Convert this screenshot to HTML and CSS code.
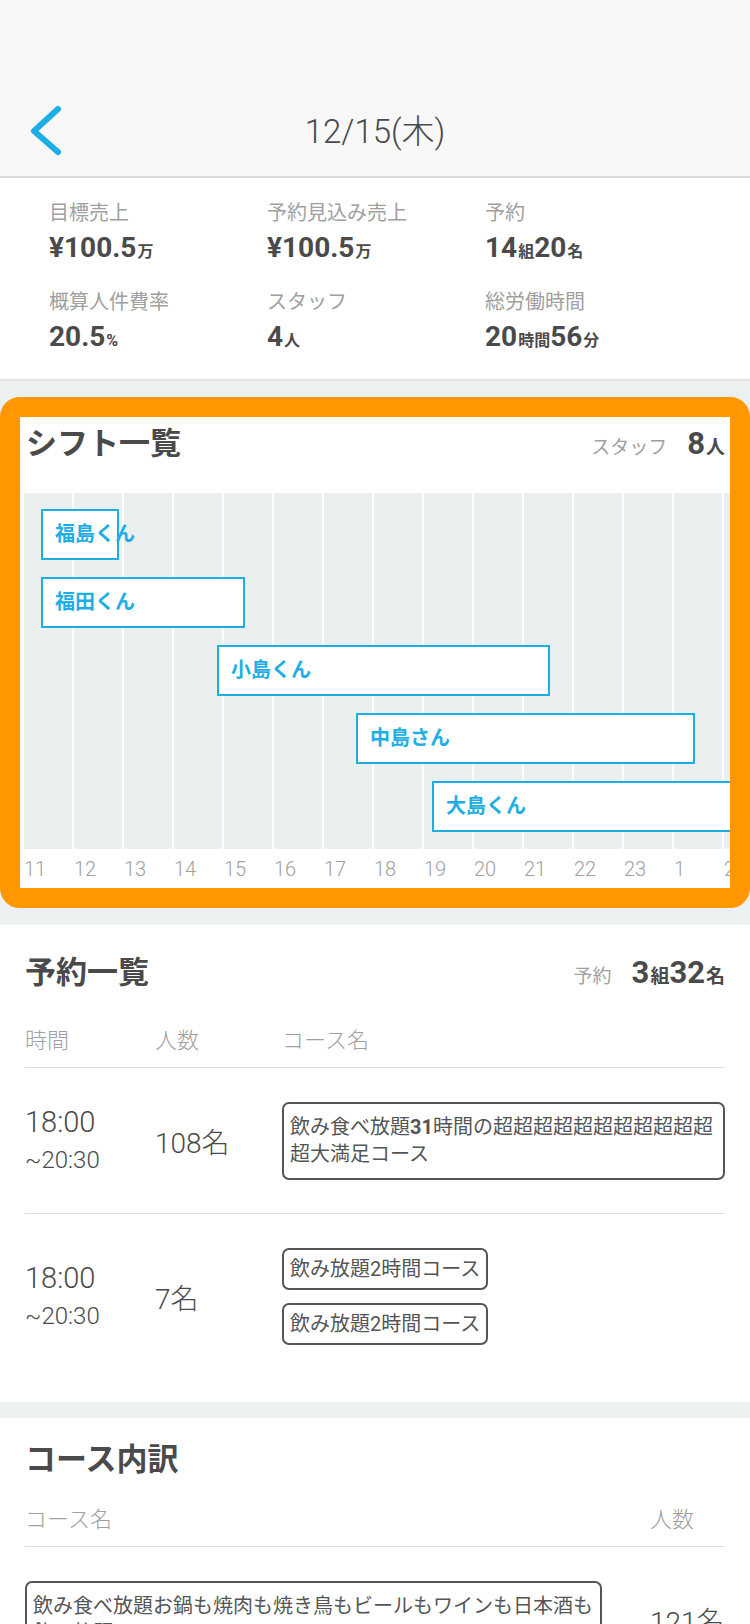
FILE: index.html
```html
<!DOCTYPE html>
<html lang="ja">
<head>
    <meta charset="UTF-8">
    <meta name="viewport" content="width=device-width, initial-scale=1.0">
    <title>12/15(木)</title>
    <link rel="stylesheet" href="styles.css">
</head>
<body>
    <header class="topbar">
        <div class="topbar-row">
            <a class="back" href="#">
                <svg width="36" height="56" viewBox="0 0 36 56">
                    <path d="M30 6 L6 28 L30 49" fill="none" stroke="#1eaee6" stroke-width="6" stroke-linecap="round" stroke-linejoin="round"/>
                </svg>
            </a>
            <h1 class="date">12/15(木)</h1>
            <div></div>
        </div>
    </header>

    <section class="summary">
        <div class="stat">
            <div class="stat-label">目標売上</div>
            <div class="stat-value">¥100.5<small>万</small></div>
        </div>
        <div class="stat">
            <div class="stat-label">予約見込み売上</div>
            <div class="stat-value">¥100.5<small>万</small></div>
        </div>
        <div class="stat">
            <div class="stat-label">予約</div>
            <div class="stat-value">14<small>組</small>20<small>名</small></div>
        </div>
        <div class="stat">
            <div class="stat-label">概算人件費率</div>
            <div class="stat-value">20.5<small>%</small></div>
        </div>
        <div class="stat">
            <div class="stat-label">スタッフ</div>
            <div class="stat-value">4<small>人</small></div>
        </div>
        <div class="stat">
            <div class="stat-label">総労働時間</div>
            <div class="stat-value">20<small>時間</small>56<small>分</small></div>
        </div>
    </section>

    <section class="shift-card">
        <div class="card-head">
            <h2>シフト一覧</h2>
            <div class="count">
                <span class="count-label">スタッフ</span>
                <span class="count-value">8<small>人</small></span>
            </div>
        </div>
        <div class="timeline">
            <div class="lanes">
                <div class="bar" style="margin-left: 17px; width: 78px;">福島くん</div>
                <div class="bar" style="margin-left: 17px; width: 204px;">福田くん</div>
                <div class="bar" style="margin-left: 193px; width: 333px;">小島くん</div>
                <div class="bar" style="margin-left: 332px; width: 339px;">中島さん</div>
                <div class="bar" style="margin-left: 408px; width: 400px;">大島くん</div>
            </div>
            <div class="hours">
                <span>11</span><span>12</span><span>13</span><span>14</span><span>15</span>
                <span>16</span><span>17</span><span>18</span><span>19</span><span>20</span>
                <span>21</span><span>22</span><span>23</span><span>1</span><span>2</span>
            </div>
        </div>
    </section>

    <section class="panel">
        <div class="panel-head">
            <h2>予約一覧</h2>
            <div class="count">
                <span class="count-label">予約</span>
                <span class="count-value">3<small>組</small>32<small>名</small></span>
            </div>
        </div>
        <div class="res-head">
            <span>時間</span>
            <span>人数</span>
            <span>コース名</span>
        </div>
        <div class="res-row">
            <div class="time">
                <div class="time-start">18:00</div>
                <div class="time-end">~20:30</div>
            </div>
            <div class="people">108名</div>
            <div class="tags">
                <div class="tag multi">飲み食べ放題<b>31</b>時間の超超超超超超超超超超超超大満足コース</div>
            </div>
        </div>
        <div class="res-row">
            <div class="time">
                <div class="time-start">18:00</div>
                <div class="time-end">~20:30</div>
            </div>
            <div class="people">7名</div>
            <div class="tags">
                <div class="tag">飲み放題2時間コース</div>
                <div class="tag">飲み放題2時間コース</div>
            </div>
        </div>
    </section>

    <section class="panel panel-courses">
        <div class="panel-head">
            <h2>コース内訳</h2>
        </div>
        <div class="course-head">
            <span>コース名</span>
            <span>人数</span>
        </div>
        <div class="course-row">
            <div class="tags">
                <div class="tag multi">飲み食べ放題お鍋も焼肉も焼き鳥もビールもワインも日本酒も飲み放題コース</div>
            </div>
            <div class="people">121名</div>
        </div>
    </section>
</body>
</html>
```

FILE: styles.css
```css
body {
    margin: 0;
    width: 750px;
    background: #ecf0f1;
    color: #4a4a4a;
    font-family: Roboto, "Noto Sans CJK JP", sans-serif;
}
h1, h2 {
    margin: 0;
}

/* ヘッダー */
.topbar {
    background: #f8f8f8;
    border-bottom: 2px solid #dcdcdc;
    padding-top: 86px;
}
.topbar-row {
    height: 90px;
    display: grid;
    grid-template-columns: 1fr auto 1fr;
    align-items: center;
}
.back {
    display: flex;
    padding-left: 28px;
}
.date {
    font-size: 33px;
    font-weight: 300;
    line-height: 40px;
    margin-top: 2px;
}

/* サマリー */
.summary {
    background: #fff;
    border-bottom: 2px solid #e3e3e3;
    display: grid;
    grid-template-columns: repeat(3, 218px);
    row-gap: 23px;
    padding: 22px 0 24px 49px;
}
.stat-label {
    font-size: 20px;
    line-height: 26px;
    color: #a0a0a0;
}
.stat-value {
    margin-top: 4px;
    font-size: 28px;
    font-weight: bold;
    line-height: 36px;
}
.stat-value small,
.count-value small {
    font-size: 16px;
    line-height: 1;
    margin-left: 1px;
}

/* シフト一覧 */
.shift-card {
    margin-top: 16px;
    background: #fff;
    border: 20px solid #ff9800;
    border-radius: 20px;
    overflow: hidden;
}
.card-head {
    height: 76px;
    box-sizing: border-box;
    padding: 7px 5px 0 6px;
    display: flex;
    justify-content: space-between;
    align-items: baseline;
}
h2 {
    font-size: 31px;
    font-weight: bold;
    line-height: 40px;
}
.count-label {
    font-size: 19px;
    color: #a0a0a0;
    margin-right: 16px;
}
.count-value {
    font-size: 31px;
    font-weight: bold;
}
.count-value small {
    font-size: 19px;
}
.timeline {
    margin-left: 4px;
}
.lanes {
    background: repeating-linear-gradient(90deg, #ebeff0 0 48px, #fff 48px 50px);
    padding: 16px 0 17px;
    display: flex;
    flex-direction: column;
    align-items: flex-start;
    gap: 17px;
}
.bar {
    flex: none;
    box-sizing: border-box;
    height: 51px;
    line-height: 47px;
    padding-left: 12px;
    border: 2px solid #1eaee6;
    background: #fff;
    color: #1eaee6;
    font-size: 20px;
    font-weight: bold;
    white-space: nowrap;
}
.hours {
    display: flex;
    height: 39px;
    align-items: center;
    white-space: nowrap;
}
.hours span {
    flex: none;
    width: 50px;
    box-sizing: border-box;
    font-size: 20px;
    font-weight: 300;
    color: #a0a0a0;
}

/* 予約一覧・コース内訳 */
.panel {
    background: #fff;
    margin-top: 17px;
    padding: 28px 25px 24px;
}
.panel-courses {
    margin-top: 16px;
    padding-top: 22px;
}
.panel-head {
    display: flex;
    justify-content: space-between;
    align-items: baseline;
}
.res-head,
.course-head {
    display: grid;
    margin-top: 33px;
    padding-bottom: 11px;
    border-bottom: 1px solid #dedede;
    font-size: 22px;
    font-weight: 300;
    line-height: 30px;
    color: #a0a0a0;
}
.res-head,
.res-row {
    grid-template-columns: 130px 127px 1fr;
}
.course-head,
.course-row {
    grid-template-columns: 1fr 75px;
    column-gap: 48px;
}
.course-head {
    margin-top: 25px;
}
.res-row,
.course-row {
    display: grid;
    align-items: center;
    padding: 34px 0 33px;
    border-bottom: 1px solid #dedede;
}
.res-row:last-child {
    border-bottom: none;
}
.time-start {
    font-size: 29px;
    font-weight: 300;
    line-height: 38px;
}
.time-end {
    font-size: 24px;
    font-weight: 300;
    line-height: 38px;
}
.people {
    font-size: 28px;
    font-weight: 300;
}
.tags {
    display: flex;
    flex-direction: column;
    align-items: flex-start;
    gap: 13px;
}
.tag {
    border: 2px solid #555;
    border-radius: 7px;
    padding: 5.5px 6px;
    font-size: 20px;
    line-height: 27px;
    color: #555;
}
.tag.multi {
    padding: 10px 6px;
}
.tag b {
    font-weight: bold;
}
```
